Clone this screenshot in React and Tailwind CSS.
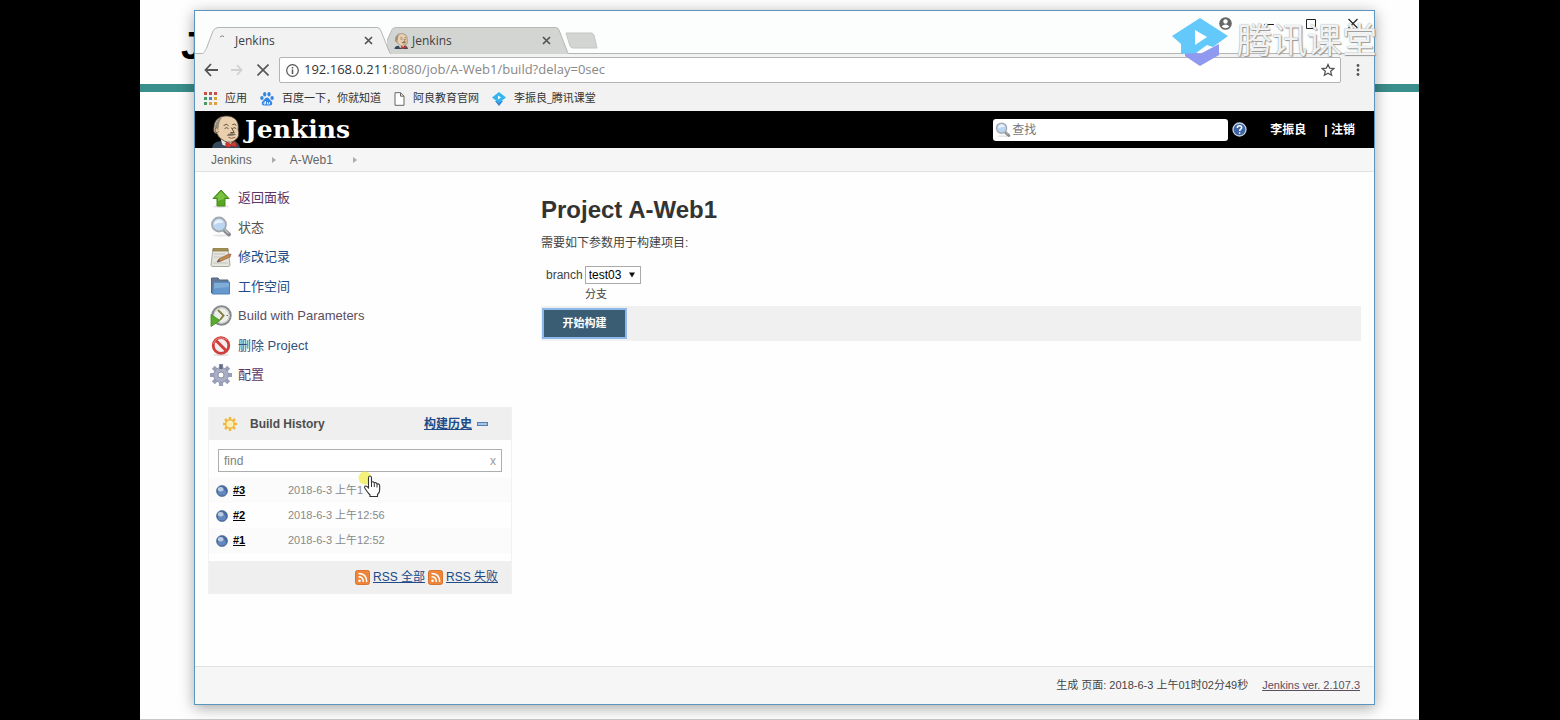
import React from "react";

const BrowserTab = ({ title, active, children }) => (
  <div
    className={
      active
        ? "relative z-10 flex h-[27px] w-[190px] items-center pl-[15px] pr-[15px]"
        : "relative -ml-[4px] flex h-[27px] w-[182px] items-center pl-[6px] pr-[15px]"
    }
  >
    <svg
      className="absolute inset-0 h-full w-full"
      viewBox="0 0 190 27"
      preserveAspectRatio="none"
      aria-hidden="true"
    >
      <path
        d={
          active
            ? "M0 27 C4 26 4 24 6 20 L12 4 Q14 .5 17 .5 H176 Q179 .5 180 4 L188 24 Q189 27 190 27"
            : "M3 27 L-1 16 L5 3 Q6 .5 9 .5 H176 Q179 .5 180 4 L188 24 Q189 27 190 27"
        }
        fill={active ? "#f1f2f1" : "#d3d5d3"}
        stroke="#b4b6b5"
      />
    </svg>
    <span className="relative flex h-[16px] w-[16px] items-center justify-center">
      {children}
    </span>
    <span className="relative ml-[3px] flex-1 text-[12px] text-[#404040]">
      {title}
    </span>
    <button type="button" aria-label="Close tab" className="relative p-[3px]">
      <svg width="9" height="9" viewBox="0 0 9 9" stroke="#555" strokeWidth="1.7">
        <path d="M1 1 L8 8 M8 1 L1 8" />
      </svg>
    </button>
  </div>
);

const Butler = ({ className }) => (
  <svg className={className} viewBox="0 0 32 34" aria-hidden="true">
    <path d="M1 34 Q2 27 10 27 L24 27 Q29 28 30 34 Z" fill="#34495b" />
    <path d="M10 25 L22 26 L20 33 L12 31 Z" fill="#eee7df" />
    <path
      d="M6 19 Q2 19 3 13 Q3 5 10 2 Q19 -1 25 4 Q29 8 28 15 Q30 22 26 25 Q21 30 14 27 Q8 24 6 19 Z"
      fill="#e9cfae"
      stroke="#4d4036"
      strokeWidth=".8"
    />
    <path d="M4 12 Q5 4 12 2 Q8 6 8 12 L7 18 Q4 17 4 12 Z" fill="#918b80" />
    <path d="M6 13 Q3 14 5 18 Q7 19 8 17" fill="#dcb993" stroke="#594638" strokeWidth=".7" />
    <path
      d="M13 11 Q16 8 18 11 M22 10 Q25 8 26 11 M14 14 Q16 12 18 14 M22 14 Q24 12 26 14 M21 13 L24 18 L20 18"
      fill="none"
      stroke="#4b3d31"
      strokeWidth=".9"
    />
    <path d="M16 21 Q20 17 26 20 Q22 22 16 21 Z" fill="#756958" />
    <path d="M18 23 Q21 25 25 23" fill="none" stroke="#96614a" />
    <path d="M15 29 Q16 27 20 30 L25 27 L27 33 L21 32 L16 34 Z" fill="#d33833" stroke="#802c28" strokeWidth=".6" />
  </svg>
);

const Magnifier = ({ className }) => (
  <svg className={className} viewBox="0 0 22 22" aria-hidden="true">
    <ellipse cx="11" cy="19.5" rx="8" ry="1.2" fill="#e5e6e5" />
    <path d="M13 13 L19 18.5" stroke="#85898e" strokeWidth="4" strokeLinecap="round" />
    <path d="M14 13 L18.5 17.5" stroke="#c3c5c8" strokeWidth="1.3" />
    <circle cx="9" cy="8.5" r="7" fill="#bcd5f1" stroke="#a3a9b1" strokeWidth="1.8" />
    <path d="M4 9 Q4 4 9 3.5 Q13 4 13 7 Q8 6 4 9 Z" fill="#e8f2fc" />
  </svg>
);

const UpArrow = () => (
  <svg className="h-[22px] w-[22px]" viewBox="0 0 22 22" aria-hidden="true">
    <ellipse cx="11" cy="19.5" rx="8" ry="1.2" fill="#dcdedc" />
    <path d="M11 3 L19 11.5 H15 V19 H7 V11.5 H3 Z" fill="#58a622" stroke="#468b1c" />
    <path d="M11 4.5 L16.5 10.5 H14 V12 L8 14 V10.5 H5.5 Z" fill="#7bc142" />
  </svg>
);

const Notepad = () => (
  <svg className="h-[22px] w-[22px]" viewBox="0 0 22 22" aria-hidden="true">
    <path d="M3 3 H18 L20 19 Q20 20.500 18 20.500 H3 Q1 20.500 1 19 Z" fill="#e6e5dd" stroke="#aaa89c" />
    <path d="M3 2.500 H18 V5 H3 Z" fill="#a68e50" stroke="#87763f" strokeWidth=".7" />
    <path d="M4 8 H15 M4 11 H13 M3 17 H18" stroke="#c4c4bc" />
    <path d="M7 16 L9 13 L18 8.500 L21 8 L20 11 L10 15.500 Z" fill="#c98b4c" stroke="#80603b" strokeWidth=".7" />
    <path d="M7 16 L9 13 L10 15.500 Z" fill="#64594d" />
    <path d="M18 8.500 L21 8 L20 11 Z" fill="#c96e55" />
  </svg>
);

const Folder = () => (
  <svg className="h-[22px] w-[22px]" viewBox="0 0 22 22" aria-hidden="true">
    <path d="M1.500 3 H8 L9.500 5 H18 V18 H1.500 Z" fill="#667990" stroke="#4e6680" />
    <path d="M3.500 7 H19.500 V19 H2.500 Z" fill="#6698cd" stroke="#4f7fb5" />
    <path d="M4 8 H19 V12 L4 13.500 Z" fill="#80acd8" />
  </svg>
);

const BuildClock = () => (
  <svg className="h-[22px] w-[22px]" viewBox="0 0 22 22" aria-hidden="true">
    <circle cx="11.500" cy="10.500" r="9.200" fill="#edefeb" stroke="#85888b" strokeWidth="2" />
    <circle cx="11.500" cy="10.500" r="7.600" fill="none" stroke="#c7c9c7" />
    <path d="M8 5 L13.500 10.500 L10 15" fill="none" stroke="#858044" strokeWidth="2" />
    <path d="M16.500 10.500 H18" stroke="#777" />
    <path d="M1 9.500 L10 15.500 L1 21.500 Z" fill="#59ac2b" stroke="#3e8821" strokeWidth=".8" />
  </svg>
);

const NoEntry = () => (
  <svg className="h-[22px] w-[22px]" viewBox="0 0 22 22" aria-hidden="true">
    <ellipse cx="11" cy="20" rx="8" ry="1.200" fill="#e0dddd" />
    <circle cx="11" cy="10.500" r="7.800" fill="#f5ecec" stroke="#cf403c" strokeWidth="2.800" />
    <path d="M5.500 5 L16.500 16" stroke="#cf403c" strokeWidth="3" />
    <path d="M3.500 9 Q5 3 11 3 Q15 3 17 5" fill="none" stroke="#e88882" />
  </svg>
);

const Gear = () => (
  <svg className="h-[22px] w-[22px]" viewBox="0 0 22 22" aria-hidden="true">
    <g stroke="#999fb9" strokeWidth="4.200">
      <path d="M11 0 V22 M0 11 H22 M3.300 3.300 L18.700 18.700 M18.700 3.300 L3.300 18.700" />
    </g>
    <circle cx="11" cy="11" r="7.400" fill="#a9aec5" stroke="#959bb5" />
    <path d="M11 0.500 V5" stroke="#626b7e" strokeWidth="3" />
    <circle cx="11" cy="11" r="3" fill="#fdfefd" stroke="#8a90a8" />
  </svg>
);

const Ball = () => (
  <svg className="h-[12px] w-[12px]" viewBox="0 0 12 12" aria-hidden="true">
    <circle cx="6" cy="6" r="5.500" fill="#496da3" stroke="#405c83" strokeWidth=".6" />
    <ellipse cx="6" cy="7.500" rx="4" ry="3" fill="#6488bd" />
    <ellipse cx="4.700" cy="4.200" rx="2.800" ry="2.200" fill="#b9cce5" />
  </svg>
);

const Rss = () => (
  <svg className="h-[15px] w-[15px]" viewBox="0 0 15 15" aria-hidden="true">
    <rect x=".5" y=".5" width="14" height="14" rx="2" fill="#ee853b" stroke="#d9752e" />
    <circle cx="4.500" cy="10.700" r="1.300" fill="#fff" />
    <path d="M3.500 6.800 Q8.300 6.800 8.300 12 M3.500 3.500 Q11.700 3.500 11.700 12" fill="none" stroke="#fff" strokeWidth="1.500" />
  </svg>
);

const Sun = () => (
  <svg className="h-[16px] w-[16px]" viewBox="0 0 16 16" aria-hidden="true">
    <path d="M8 1 V15 M1 8 H15 M3 3 L13 13 M13 3 L3 13" stroke="#f3b640" strokeWidth="2.500" />
    <circle cx="8" cy="8" r="4.200" fill="#fdf0b4" stroke="#efb136" strokeWidth="1.300" />
  </svg>
);

const Paw = () => (
  <svg className="h-[14px] w-[14px]" viewBox="0 0 14 14" fill="#3385e8" aria-hidden="true">
    <ellipse cx="4.700" cy="2.300" rx="1.600" ry="2.200" />
    <ellipse cx="9" cy="2.300" rx="1.600" ry="2.200" />
    <ellipse cx="1.900" cy="6" rx="1.700" ry="2" />
    <ellipse cx="12.100" cy="6" rx="1.700" ry="2" />
    <path d="M7 5.500 Q9 5.500 9.700 7.500 L12 10 Q13 13.500 9.500 13.500 H4.500 Q1 13.500 2 10 L4.300 7.500 Q5 5.500 7 5.500 Z" />
    <path d="M5.500 9 V12 H4 Q3.500 10 5.500 10 M7.500 10 V12 H9.500 V10" fill="none" stroke="#fff" strokeWidth=".8" />
  </svg>
);

const AppsGrid = () => (
  <svg className="h-[13px] w-[13px]" viewBox="0 0 13 13" aria-hidden="true">
    <path d="M0 0h3v3H0z M5 0h3v3H5z M10 0h3v3h-3z" fill="#c75143" />
    <path d="M0 5h3v3H0z" fill="#4b9962" />
    <path d="M5 5h3v3H5z" fill="#4e7fc1" />
    <path d="M10 5h3v3h-3z" fill="#d4a33a" />
    <path d="M0 10h3v3H0z" fill="#4b9962" />
    <path d="M5 10h3v3H5z M10 10h3v3h-3z" fill="#dca339" />
  </svg>
);

const PageIcon = () => (
  <svg className="h-[14px] w-[11px]" viewBox="0 0 11 14" fill="#fff" stroke="#666" aria-hidden="true">
    <path d="M1 .7 H6.500 L10 4.200 V13.300 H1 Z M6.500 .7 V4.200 H10" />
  </svg>
);

const ClassroomIcon = () => (
  <svg className="h-[14px] w-[14px]" viewBox="0 0 14 14" aria-hidden="true">
    <path d="M3 9 L7 14 L11 9 Z" fill="#3484dd" />
    <path d="M7 0 L14 5.500 L7 11 L0 5.500 Z" fill="#33b5ef" />
    <path d="M6 3.500 L9 5.500 L6 7.500 Z" fill="#fff" />
  </svg>
);

const bookmarks = [
  { title: "应用", icon: <AppsGrid /> },
  { title: "百度一下，你就知道", icon: <Paw /> },
  { title: "阿良教育官网", icon: <PageIcon /> },
  { title: "李振良_腾讯课堂", icon: <ClassroomIcon /> },
];

const tasks = [
  { title: "返回面板", icon: <UpArrow />, color: "text-[#5c3566]" },
  { title: "状态", icon: <Magnifier className="h-[22px] w-[22px]" />, color: "text-[#555555]" },
  { title: "修改记录", icon: <Notepad />, color: "text-[#204a87]" },
  { title: "工作空间", icon: <Folder />, color: "text-[#204a87]" },
  { title: "Build with Parameters", icon: <BuildClock />, color: "text-[#5c4f5f]" },
  { title: "删除 Project", icon: <NoEntry />, color: "text-[#35507a]" },
  { title: "配置", icon: <Gear />, color: "text-[#5c3566]" },
];

const builds = [
  { id: "#3", time: "2018-6-3 上午1" },
  { id: "#2", time: "2018-6-3 上午12:56" },
  { id: "#1", time: "2018-6-3 上午12:52" },
];

const TitleBar = () => (
  <div className="flex h-[43px] items-end border-b border-[#b4b6b5] bg-[#fcfefe] pl-[6px] pr-[16px]">
    <div className="-mb-px flex items-end">
      <BrowserTab title="Jenkins" active>
        <svg width="16" height="16" viewBox="0 0 16 16" aria-hidden="true">
          <path d="M4 4 Q6 2 8 3.500" fill="none" stroke="#888" />
        </svg>
      </BrowserTab>
      <BrowserTab title="Jenkins">
        <Butler className="h-[16px] w-[15px]" />
      </BrowserTab>
    </div>
    <button type="button" aria-label="New tab" className="mb-[4px] -ml-[4px]">
      <svg width="33" height="17" viewBox="0 0 33 17">
        <path d="M1 1 H26 Q28 1 29 3 L32 16 H8 Q6 16 5 14 Z" fill="#d3d5d3" stroke="#c4c6c4" />
      </svg>
    </button>
    <div className="ml-auto flex items-center gap-[32px] self-start pt-[6px]">
      <svg width="13" height="13" viewBox="0 0 13 13" aria-label="Profile">
        <circle cx="6.500" cy="6.500" r="6.300" fill="#666" />
        <circle cx="6.500" cy="4.500" r="2.200" fill="#fff" />
        <path d="M2.500 9.500 Q6.500 5.500 10.500 9.500 Q6.500 13 2.500 9.500 Z" fill="#fff" />
      </svg>
      <button type="button" aria-label="Minimize">
        <svg width="10" height="11" viewBox="0 0 10 11" stroke="#222">
          <path d="M0 6.500 H10" />
        </svg>
      </button>
      <button type="button" aria-label="Maximize">
        <svg width="10" height="11" viewBox="0 0 10 11" stroke="#222" fill="none">
          <path d="M.5 1.500 H9.500 V10.500 H.5 Z" />
        </svg>
      </button>
      <button type="button" aria-label="Close">
        <svg width="10" height="11" viewBox="0 0 10 11" stroke="#222" strokeWidth="1.200">
          <path d="M.5 1 L9.500 10 M9.500 1 L.5 10" />
        </svg>
      </button>
    </div>
  </div>
);

const AddressBar = () => (
  <div className="flex h-[32px] items-center pl-[9px] pr-[14px]">
    <button type="button" aria-label="Back">
      <svg width="14" height="14" viewBox="0 0 14 14" fill="none" stroke="#555" strokeWidth="1.800">
        <path d="M14 7 H1.500 M7 1 L1.500 7 L7 13" />
      </svg>
    </button>
    <button type="button" aria-label="Forward" className="ml-[13px]">
      <svg width="12" height="12" viewBox="0 0 12 12" fill="none" stroke="#d0d2d1" strokeWidth="1.800">
        <path d="M0 6 H10.500 M6 1 L10.500 6 L6 11" />
      </svg>
    </button>
    <button type="button" aria-label="Stop" className="ml-[14px]">
      <svg width="12" height="12" viewBox="0 0 12 12" stroke="#555" strokeWidth="1.600">
        <path d="M.5 .5 L11.500 11.500 M11.500 .5 L.5 11.500" />
      </svg>
    </button>
    <div className="ml-[10px] flex h-[26px] flex-1 items-center rounded-[2px] border border-[#b3b5b4] bg-white pl-[6px] pr-[5px]">
      <svg width="13" height="13" viewBox="0 0 13 13" fill="none" stroke="#555" aria-hidden="true">
        <circle cx="6.500" cy="6.500" r="5.800" strokeWidth="1.200" />
        <path d="M6.500 5.500 V10 M6.500 3 V4.500" strokeWidth="1.500" />
      </svg>
      <p className="ml-[5px] flex-1 text-[13px] text-[#888]">
        <span className="text-[#333]">192.168.0.211</span>
        :8080/job/A-Web1/build?delay=0sec
      </p>
      <button type="button" aria-label="Bookmark this page">
        <svg width="14" height="14" viewBox="0 0 14 14" fill="none" stroke="#555" strokeWidth="1.300">
          <path d="M7 1.500 L8.700 5.200 L12.800 5.600 L9.700 8.300 L10.600 12.300 L7 10.200 L3.400 12.300 L4.300 8.300 L1.200 5.600 L5.300 5.200 Z" />
        </svg>
      </button>
    </div>
    <button type="button" aria-label="Menu" className="ml-[15px]">
      <svg width="4" height="14" viewBox="0 0 4 14" fill="#555">
        <circle cx="2" cy="2.500" r="1.400" />
        <circle cx="2" cy="7" r="1.400" />
        <circle cx="2" cy="11.500" r="1.400" />
      </svg>
    </button>
  </div>
);

const JenkinsHeader = () => (
  <header className="flex h-[37px] items-center bg-black pl-[16px] pr-[19px] text-white">
    <a href="#home" className="flex h-full items-center">
      <Butler className="mt-[4px] h-[33px] w-[31px]" />
      <span className="ml-[3px] font-['DejaVu_Serif'] text-[25px] leading-[32px] font-bold">
        Jenkins
      </span>
    </a>
    <label className="ml-auto flex h-[22px] w-[235px] items-center rounded-[3px] bg-white px-[2px]">
      <Magnifier className="h-[16px] w-[16px]" />
      <input
        type="text"
        aria-label="查找"
        placeholder="查找"
        className="ml-[1px] min-w-0 flex-1 text-[12px] text-[#333] outline-none placeholder:text-[#777]"
      />
    </label>
    <a href="#help" aria-label="Help" className="ml-[4px]">
      <svg width="15" height="15" viewBox="0 0 15 15">
        <circle cx="7.500" cy="7.500" r="6.500" fill="#3d65a5" stroke="#c7d3e4" strokeWidth="1.300" />
        <path d="M5.300 6 Q5.300 3.800 7.500 3.800 Q9.700 3.800 9.700 5.600 Q9.700 6.600 8.500 7.300 Q7.600 7.900 7.600 9 M7.600 10.200 V11.700" fill="none" stroke="#fff" strokeWidth="1.500" />
      </svg>
    </a>
    <a href="#user" className="ml-[23px] text-[12px] font-bold">
      李振良
    </a>
    <span className="ml-[18px] text-[12px] font-bold">
      | <a href="#logout">注销</a>
    </span>
  </header>
);

const Crumb = ({ children }) => (
  <li className="flex items-center">
    <a href="#crumb">{children}</a>
    <svg className="ml-[20px] mr-[14px] h-[6px] w-[4px]" viewBox="0 0 4 6" aria-hidden="true">
      <path d="M0 0 L4 3 L0 6 Z" fill="#aaa" />
    </svg>
  </li>
);

const BuildHistory = () => (
  <section className="mt-[17px] border border-[#f0f1f0]">
    <div className="flex h-[32px] items-center bg-[#eeefee] pl-[13px] pr-[23px]">
      <Sun />
      <h2 className="ml-[12px] flex-1 text-[12px] font-bold text-[#4d4d4d]">
        Build History
      </h2>
      <a href="#trend" className="text-[12px] font-bold text-[#204a87] underline">
        构建历史
      </a>
      <svg className="ml-[5px] h-[4px] w-[11px]" viewBox="0 0 11 4" aria-hidden="true">
        <rect x=".5" y=".5" width="10" height="3" fill="#a9c3e6" stroke="#537bb5" />
      </svg>
    </div>
    <label className="mx-[9px] mt-[9px] flex h-[23px] items-center border border-[#adafae] bg-white px-[5px]">
      <input
        type="text"
        aria-label="find"
        placeholder="find"
        className="min-w-0 flex-1 text-[12px] outline-none placeholder:text-[#808080]"
      />
      <span className="text-[12px] text-[#999]">x</span>
    </label>
    <table className="mt-[6px] w-full">
      <tbody>
        {builds.map(({ id, time }) => (
          <tr key={id} className="h-[25px] odd:bg-[#fafbfa]">
            <td className="w-[24px] pl-[7px]">
              <Ball />
            </td>
            <td className="w-[55px] text-[11px] font-bold text-black">
              <a href="#build" className="underline">
                {id}
              </a>
            </td>
            <td className="text-[11px] text-[#888a88]">{time}</td>
          </tr>
        ))}
      </tbody>
    </table>
    <div className="mt-[8px] flex h-[32px] items-center justify-end gap-[3px] bg-[#eeefee] pr-[13px] text-[12px] text-[#204a87]">
      <Rss />
      <a href="#rss-all" className="underline">
        RSS 全部
      </a>
      <Rss />
      <a href="#rss-failed" className="underline">
        RSS 失败
      </a>
    </div>
  </section>
);

const BuildForm = () => (
  <main className="min-w-0 flex-1 pt-[21px] text-[12px] text-[#444]">
    <h1 className="text-[24px] leading-[34px] font-bold text-[#333]">
      Project A-Web1
    </h1>
    <p className="mt-[7px] leading-[18px]">需要如下参数用于构建项目:</p>
    <form className="mt-[14px]">
      <div className="flex items-center gap-[2px] pl-[5px]">
        <label htmlFor="branch">branch</label>
        <div className="relative">
          <select
            id="branch"
            className="block h-[18px] w-[56px] appearance-none border border-[#aaa] bg-white pl-[3px] text-[12px] leading-[16px] text-black"
          >
            <option>test03</option>
          </select>
          <svg className="pointer-events-none absolute top-[6px] right-[6px] h-[6px] w-[6px]" viewBox="0 0 7 6" aria-hidden="true">
            <path d="M0 0 H7 L3.500 6 Z" fill="#111" />
          </svg>
        </div>
      </div>
      <p className="pb-[2px] pl-[44px] text-[11px] leading-[20px]">分支</p>
      <div className="bg-[#eff0ef] px-[1px] py-[2px]">
        <button
          type="button"
          className="block h-[31px] w-[85px] border-2 border-[#8fb8ea] bg-[#3b5d74] text-[11px] font-bold text-white"
        >
          开始构建
        </button>
      </div>
    </form>
  </main>
);

const PointerHand = () => (
  <div className="pointer-events-none absolute top-[469px] left-[216px]" aria-hidden="true">
    <svg width="26" height="30" viewBox="0 0 26 30">
      <circle cx="9" cy="9" r="6.500" fill="#f2ee4e" opacity=".75" />
      <path
        d="M12.500 19 V9 Q12.500 7 14 7 Q15.500 7 15.500 9 V14 Q15.500 12.500 17 12.700 Q18.300 13 18.300 14.500 Q18.500 13.300 20 13.700 Q21 14 21 15.500 Q21.500 14.500 22.700 15 Q23.700 15.500 23.700 17 V21 Q23.500 24 21.500 25.500 V27.500 H14 V26 Q12 24 9 19.500 Q8 18 9 17.200 Q10 16.500 11.200 17.700 Z"
        fill="#fff"
        stroke="#333"
        strokeWidth="1.100"
      />
      <path d="M15.500 14 V18 M18.300 14.500 V18 M21 15.500 V18.500" stroke="#333" />
    </svg>
  </div>
);

const Watermark = () => (
  <div className="pointer-events-none absolute top-[15px] right-[42px] flex items-center gap-[8px]">
    <svg width="58" height="52" viewBox="0 0 58 52" aria-hidden="true">
      <path d="M14 33 L29 39 L48 29 V40 L29 51 L14 41 Z" fill="#8f99f0" />
      <path d="M29 3 L57 21 L42 32 L36 30 L25 38 L10 39 V29 L1 21 Z" fill="#62c9fa" />
      <path d="M24 15 L36 22 L24 30 Z" fill="#fff" />
    </svg>
    <span className="text-[35px] leading-[52px] text-white/90 [text-shadow:0_0_1px_#777,1px_1px_1px_#999]">
      腾讯课堂
    </span>
  </div>
);

const App = () => {
  return (
    <div className="min-h-screen bg-black pr-[141px] pl-[140px] font-['Liberation_Sans','Noto_Sans_CJK_SC',sans-serif]">
      <div className="relative flex min-h-screen flex-col overflow-hidden bg-[#fdfefd] pt-[10px] pr-[44px] pb-[15px] pl-[54px]">
        <div className="absolute inset-x-0 top-[84px] h-[8px] bg-[#3a8e8b]" />
        <span className="absolute top-[24px] left-[41px] text-[38px] leading-[44px] font-bold text-black">
          J
        </span>
        <div className="absolute inset-x-0 bottom-0 h-px bg-[#c8c8c8]" />

        <div className="relative flex flex-1 flex-col border border-[#5d96bd] bg-[#fdfefd] shadow-[0_3px_14px_rgba(0,0,0,0.35)]">
          <div className="bg-[#f1f2f1] font-['Open_Sans','Noto_Sans_CJK_SC',sans-serif]">
            <TitleBar />
            <AddressBar />
            <nav className="flex h-[25px] items-center gap-[13px] pl-[9px] text-[11px] text-[#333]">
              {bookmarks.map(({ title, icon }) => (
                <a key={title} href="#bookmark" className="flex items-center gap-[8px]">
                  {icon}
                  {title}
                </a>
              ))}
            </nav>
          </div>

          <JenkinsHeader />
          <ol className="flex h-[24px] items-center border-b border-[#dfe2df] bg-[#f5f6f5] pl-[16px] text-[12px] text-[#666]">
            <Crumb>Jenkins</Crumb>
            <Crumb>A-Web1</Crumb>
          </ol>

          <div className="flex flex-1 gap-[29px] pr-[13px] pl-[13px]">
            <aside className="w-[304px] shrink-0 pt-[11px]">
              <ul className="grid h-[207px] grid-rows-7">
                {tasks.map(({ title, icon, color }) => (
                  <li key={title}>
                    <a
                      href="#task"
                      className={`flex h-full items-center gap-[6px] pl-[2px] text-[13px] ${color}`}
                    >
                      {icon}
                      {title}
                    </a>
                  </li>
                ))}
              </ul>
              <BuildHistory />
            </aside>
            <BuildForm />
          </div>

          <footer className="flex h-[38px] items-center justify-end gap-[14px] border-t border-[#dfe2df] bg-[#f5f6f5] pr-[14px] text-[11px] text-[#444]">
            <span>生成 页面: 2018-6-3 上午01时02分49秒</span>
            <a href="#version" className="text-[#5c4f5f] underline">
              Jenkins ver. 2.107.3
            </a>
          </footer>
        </div>

        <PointerHand />
        <Watermark />
      </div>
    </div>
  );
};

export default App;
